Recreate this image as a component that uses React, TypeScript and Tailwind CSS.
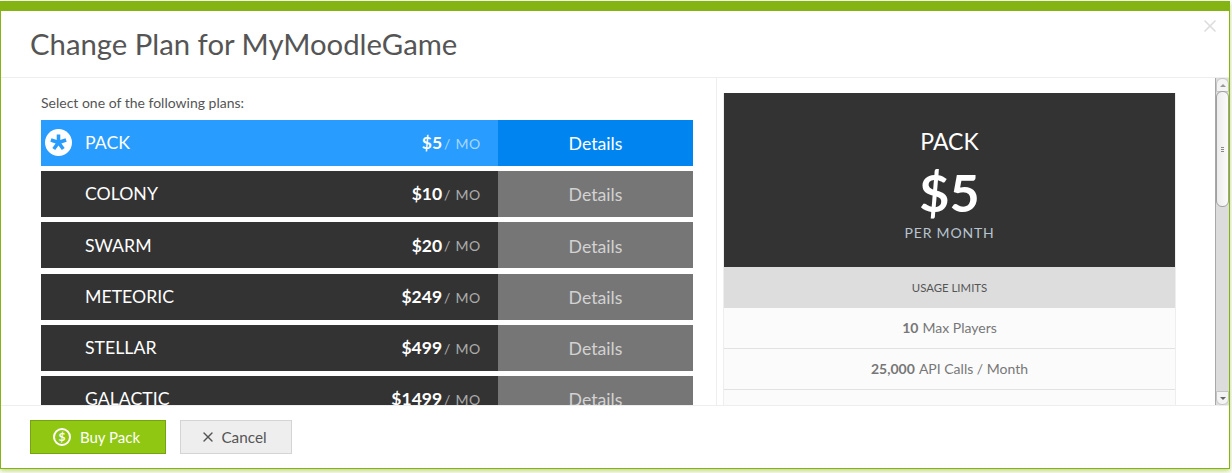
import { X } from 'lucide-react';

const plans = [
  { name: 'PACK', price: '$5', active: true },
  { name: 'COLONY', price: '$10' },
  { name: 'SWARM', price: '$20' },
  { name: 'METEORIC', price: '$249' },
  { name: 'STELLAR', price: '$499' },
  { name: 'GALACTIC', price: '$1499' },
];

function PlanRow({ name, price, active }: { name: string; price: string; active?: boolean }) {
  return (
    <div className="flex h-[46px] mb-[5.2px] shrink-0 text-white">
      <div className={`flex items-center w-[457px] pr-[17px] ${active ? 'bg-[#289cff]' : 'bg-[#333333]'}`}>
        <div className="w-[44px] flex justify-start pl-[4px] -mt-[1px]">
          {active && (
            <span className="w-[27px] h-[27px] rounded-full bg-white flex items-center justify-center">
              <svg viewBox="0 0 16 16" className="w-[19px] h-[19px]" stroke="#289cff" strokeWidth="3" strokeLinecap="butt">
                <path d="M8 8V1.2M8 8L1.6 5.9M8 8L14.4 5.9M8 8L4 13.5M8 8L12 13.5" />
              </svg>
            </span>
          )}
        </div>
        <span className="text-[17.7px] leading-none">{name}</span>
        <span className="ml-auto text-[17.5px] font-bold leading-none">{price}</span>
        <span className="ml-[2px] text-[14px] leading-none tracking-[0.7px] text-white/60 mt-[2px]">/ MO</span>
      </div>
      <div
        className={`flex-1 flex items-center justify-center text-[17.7px] pt-[3px] ${
          active ? 'bg-[#0084f0] text-white' : 'bg-[#767676] text-[#d2d2d2]'
        }`}
      >
        Details
      </div>
    </div>
  );
}

function Scrollbar() {
  return (
    <div className="w-[14px] shrink-0 flex flex-col bg-[#dcdcdc] border-l border-[#a8a8a8] -ml-[1px]">
      <div className="h-[14px] rounded-t-[6px] bg-[#f4f4f4] border border-[#c4c4c4] flex items-center justify-center">
        <span className="w-0 h-0 border-x-[3px] border-x-transparent border-b-[3px] border-b-[#999]" />
      </div>
      <div className="h-[116px] rounded-[6px] -mt-[1px] bg-gradient-to-r from-[#ececec] to-[#fafafa] border border-[#a0a0a0] flex flex-col items-center justify-center gap-[1px]">
        <span className="w-[3px] h-[1px] bg-[#888]" />
        <span className="w-[3px] h-[1px] bg-[#888]" />
        <span className="w-[3px] h-[1px] bg-[#888]" />
      </div>
      <div className="flex-1" />
      <div className="h-[14px] rounded-b-[6px] bg-[#f4f4f4] border border-[#c4c4c4] flex items-center justify-center">
        <span className="w-0 h-0 border-x-[3px] border-x-transparent border-t-[3px] border-t-[#666]" />
      </div>
    </div>
  );
}

function DollarIcon() {
  return (
    <span className="w-[18px] h-[18px] rounded-full border-[2.5px] border-white flex items-center justify-center text-[12px] font-bold leading-none">
      $
    </span>
  );
}

export default function App() {
  return (
    <div className="w-[1232px] h-[473px] overflow-hidden bg-white pt-[1px] font-['Lato','Open_Sans',sans-serif]">
      <div className="relative w-[1230px] h-[468px] flex flex-col bg-white border-t-[10px] border-x border-b border-[#84b414] shadow-[0_2px_5px_rgba(134,181,20,0.55)]">
        <div className="h-[67px] shrink-0 border-b border-[#eeeeee] pl-[29px] flex items-center">
          <h1 className="text-[29.3px] leading-none text-[#555555] -mt-[1px]">Change Plan for MyMoodleGame</h1>
        </div>
        <X className="absolute right-[9px] top-[5px] w-[20px] h-[20px] text-[#dddddd]" strokeWidth={2} />

        <div className="h-[327px] shrink-0 flex overflow-hidden">
          <div className="w-[716px] shrink-0 pl-[40px] pr-[23px] border-r border-[#eeeeee] overflow-hidden">
            <p className="text-[14px] leading-none text-[#555555] mt-[18px] mb-[10px]">Select one of the following plans:</p>
            {plans.map((plan) => (
              <PlanRow key={plan.name} {...plan} />
            ))}
          </div>

          <div className="flex-1 pl-[6px] pt-[15px] min-w-0">
            <div className="w-[453px] border-x border-[#eeeeee]">
              <div className="h-[174px] bg-[#333333] text-white flex flex-col items-center">
                <div className="text-[23px] leading-none mt-[37px]">PACK</div>
                <div className="text-[52px] leading-none font-bold mt-[13px]">$5</div>
                <div className="text-[14px] leading-none tracking-[0.8px] text-[#b8c4d0] mt-[8px]">PER MONTH</div>
              </div>
              <div className="h-[41px] bg-[#dddddd] text-[#555555] text-[11.4px] pt-[1px] flex items-center justify-center">USAGE LIMITS</div>
              <div className="h-[41px] bg-[#fbfbfb] border-b border-[#e2e2e2] pb-[2px] text-[14px] text-[#777777] flex items-center justify-center">
                <b className="mr-[4px]">10</b> Max Players
              </div>
              <div className="h-[41px] bg-[#fbfbfb] border-b border-[#e2e2e2] pb-[2px] text-[14px] text-[#777777] flex items-center justify-center">
                <b className="mr-[4px]">25,000</b> API Calls / Month
              </div>
              <div className="h-[41px] bg-[#fbfbfb]" />
            </div>
          </div>
          <Scrollbar />
        </div>

        <div className="flex-1 border-t border-[#eeeeee] pl-[29px] pt-[14px] flex items-start gap-[14px]">
          <button
            type="button"
            className="w-[136px] h-[34px] bg-[#90c712] border border-[#76a30f] text-white text-[15px] flex items-center justify-center gap-[9px] pr-[3px]"
          >
            <DollarIcon />
            Buy Pack
          </button>
          <button
            type="button"
            className="w-[112px] h-[34px] bg-[#eeeeee] border border-[#d4d4d4] text-[#555555] text-[15.3px] flex items-center justify-center gap-[5px] pr-[5px]"
          >
            <X className="w-[16px] h-[16px]" strokeWidth={2} />
            Cancel
          </button>
        </div>
      </div>
    </div>
  );
}
